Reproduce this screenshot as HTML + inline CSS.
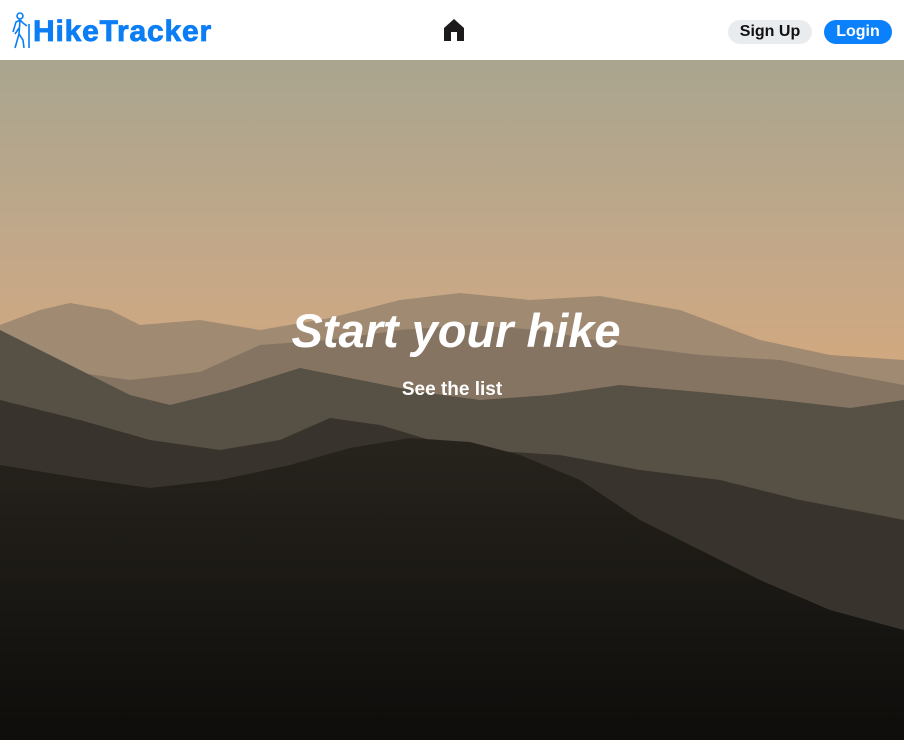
<!DOCTYPE html>
<html><head><meta charset="utf-8"><style>
*{margin:0;padding:0;box-sizing:border-box}
body{width:904px;height:740px;overflow:hidden;font-family:"Liberation Sans",sans-serif;background:#fff}
header{height:60px;position:relative;background:#fff}
.logo{position:absolute;left:33px;top:15px;font-size:30px;font-weight:bold;color:#0b7ef5;letter-spacing:0.8px;-webkit-text-stroke:0.8px #0b7ef5}
.btn{position:absolute;top:20px;height:24px;border-radius:12px;font-weight:bold;font-size:16px;line-height:24px;text-align:center}
.su{left:728px;width:84px;background:#e9ecef;color:#111}
.li{left:824px;width:68px;background:#0a80fb;color:#fff}
.hero{position:absolute;top:60px;left:0;width:904px;height:680px}
.t1{position:absolute;top:243px;left:0;width:912px;text-align:center;color:#fff;font-weight:bold;font-style:italic;font-size:47px}
.t2{position:absolute;top:319px;left:0;width:904px;text-align:center;color:#fff;font-weight:bold;font-size:19px}
</style></head><body>
<header>
<svg style="position:absolute;left:11px;top:12px" width="22" height="38" viewBox="0 0 22 38" fill="none" stroke="#0b7ef5" stroke-width="1.6">
<circle cx="9" cy="4" r="3"/><path d="M9 8 L5 10 L2 20 M9 8 L12 11 L16 14 M9 8 L8 22 L4 36 M8 22 L12 28 L13 36 M8 16 L4 22 M18 12 L18 36"/></svg>
<div class="logo">HikeTracker</div>
<svg style="position:absolute;left:443px;top:18px" width="22" height="24" viewBox="0 0 22 24"><path d="M11 1 L21 10 V23 H14 V14 H8 V23 H1 V10 Z" fill="#1c1a1a"/></svg>
<div class="btn su">Sign Up</div>
<div class="btn li">Login</div>
</header>
<div class="hero">
<svg width="904" height="680" viewBox="0 60 904 680">
<defs><linearGradient id="sky" x1="0" y1="0" x2="0" y2="1">
<stop offset="0" stop-color="#a9a58f"/><stop offset="0.3" stop-color="#c4a888"/><stop offset="0.5" stop-color="#d6a97c"/><stop offset="1" stop-color="#c39c79"/></linearGradient>
<linearGradient id="dk" x1="0" y1="0" x2="0" y2="1"><stop offset="0" stop-color="#27231d"/><stop offset="1" stop-color="#0e0d0b"/></linearGradient></defs>
<rect x="0" y="60" width="904" height="680" fill="url(#sky)"/>
<path d="M0 325 L40 310 L70 303 L110 310 L140 325 L200 320 L260 330 L330 318 L400 300 L460 293 L530 300 L600 296 L680 310 L760 340 L830 355 L904 360 V740 H0Z" fill="#a08a72"/>
<path d="M0 340 L60 370 L130 380 L200 372 L260 345 L330 340 L400 330 L470 325 L540 330 L620 345 L700 355 L780 360 L850 375 L904 385 V740 H0Z" fill="#857461"/>
<path d="M0 330 L60 360 L130 395 L170 405 L230 390 L300 368 L360 380 L420 392 L480 400 L550 395 L620 385 L700 392 L780 400 L850 408 L904 400 V740 H0Z" fill="#565045"/>
<path d="M0 400 L80 420 L150 440 L220 450 L280 440 L330 418 L380 425 L430 440 L480 450 L560 455 L640 470 L720 480 L800 500 L904 520 V740 H0Z" fill="#38332c"/>
<path d="M0 465 L80 478 L150 488 L220 480 L290 465 L350 448 L410 438 L470 442 L520 455 L580 480 L640 520 L700 550 L760 580 L830 610 L904 630 V740 H0Z" fill="url(#dk)"/>
</svg>
<div class="t1">Start your hike</div>
<div class="t2">See the list</div>
</div>
</body></html>
